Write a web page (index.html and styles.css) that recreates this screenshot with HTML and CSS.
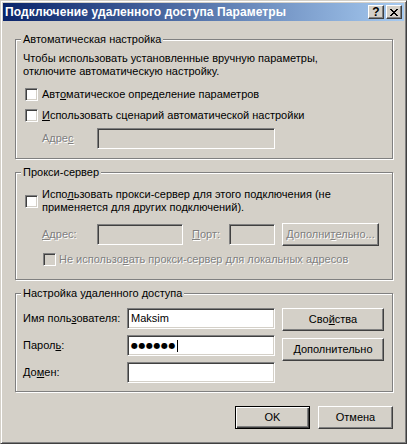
FILE: index.html
```html
<!DOCTYPE html>
<html lang="ru">
<head>
  <meta charset="UTF-8">
  <title>Подключение удаленного доступа Параметры</title>
  <link rel="stylesheet" href="styles.css">
</head>
<body>
  <div class="window">
    <div class="titlebar">
      <span class="title">Подключение удаленного доступа Параметры</span>
      <span class="tb-btn help">?</span>
      <span class="tb-btn close">
        <svg width="8" height="7" viewBox="0 0 8 7"><path d="M0 0h2v1h-2zM6 0h2v1h-2zM1 1h2v1h-2zM5 1h2v1h-2zM2 2h4v1h-4zM3 3h2v1h-2zM2 4h4v1h-4zM1 5h2v1h-2zM5 5h2v1h-2zM0 6h2v1h-2zM6 6h2v1h-2z" fill="#000"/></svg>
      </span>
    </div>

    <div class="content">
      <!-- Автоматическая настройка -->
      <fieldset class="group group-auto">
        <legend>Автоматическая настройка</legend>
        <p class="note">Чтобы использовать установленные вручную параметры,<br>отключите автоматическую настройку.</p>
        <label class="check"><span class="box"></span>Авт<u>о</u>матическое определение параметров</label>
        <label class="check check-2"><span class="box"></span><u>И</u>спользовать сценарий автоматической настройки</label>
        <div class="addr-row">
          <span class="lbl lbl-addr dis">Адре<u>с</u></span>
          <span class="field field-off field-script"></span>
        </div>
      </fieldset>

      <!-- Прокси-сервер -->
      <fieldset class="group group-proxy">
        <legend>Прокси-сервер</legend>
        <label class="check check-multi"><span class="box"></span><span>Испо<u>л</u>ьзовать прокси-сервер для этого подключения (не<br>применяется для других подключений).</span></label>
        <div class="proxy-row">
          <span class="lbl lbl-addr dis"><u>А</u>дрес:</span>
          <span class="field field-off field-host"></span>
          <span class="lbl lbl-port dis"><u>П</u>орт:</span>
          <span class="field field-off field-port"></span>
          <span class="btn btn-adv dis">Дополни<u>т</u>ельно...</span>
        </div>
        <label class="check check-bypass dis"><span class="box box-off"></span>Не использо<u>в</u>ать прокси-сервер для локальных адресов</label>
      </fieldset>

      <!-- Настройка удаленного доступа -->
      <fieldset class="group group-remote">
        <legend>Настройка удаленного доступа</legend>
        <div class="remote">
          <div class="form-grid">
            <span class="lbl">Имя поль<u>з</u>ователя:</span>
            <span class="field">Maksim</span>
            <span class="lbl">Парол<u>ь</u>:</span>
            <span class="field"><span class="dots">●●●●●●</span><span class="caret"></span></span>
            <span class="lbl">До<u>м</u>ен:</span>
            <span class="field"></span>
          </div>
          <div class="side-btns">
            <span class="btn btn-side">Сво<u>й</u>ства</span>
            <span class="btn btn-side"><u>Д</u>ополнительно</span>
          </div>
        </div>
      </fieldset>

      <div class="actions">
        <span class="btn btn-default">OK</span>
        <span class="btn">Отмена</span>
      </div>
    </div>
  </div>
</body>
</html>
```

FILE: styles.css
```css
body {
  margin: 0;
  background: #d4d0c8;
}
.window {
  width: 407px;
  height: 444px;
  box-sizing: border-box;
  border: 1px solid;
  border-color: #d4d0c8 #404040 #404040 #d4d0c8;
  box-shadow: inset 1px 1px 0 #fff, inset -1px -1px 0 #808080;
  padding: 2px;
  background: #d4d0c8;
  font: 11px/13px "Liberation Sans", Arial, sans-serif;
  color: #000;
}
u {
  text-underline-offset: 1px;
}

/* заголовок окна */
.titlebar {
  height: 18px;
  display: flex;
  align-items: center;
  padding: 0 2px 0 2px;
  background: linear-gradient(to right, #0a246a, #a6caf0);
}
.title {
  flex: 1;
  padding-left: 0;
  color: #fff;
  font-weight: bold;
  font-size: 12px;
  letter-spacing: 0.1px;
  white-space: nowrap;
}
.tb-btn {
  width: 16px;
  height: 14px;
  box-sizing: border-box;
  display: flex;
  align-items: center;
  justify-content: center;
  background: #d4d0c8;
  border: 1px solid;
  border-color: #fff #404040 #404040 #fff;
  box-shadow: inset -1px -1px 0 #808080;
}
.help {
  font-weight: bold;
  font-size: 12px;
  line-height: 12px;
}
.close {
  margin-left: 2px;
}

/* содержимое */
.content {
  padding: 12px 10px 0 12px;
}
.group {
  width: 378px;
  box-sizing: border-box;
  margin: 0;
  min-width: 0;
  padding: 0 0 0 7px;
  border: 1px solid #808080;
  box-shadow: inset 1px 1px 0 #fff, 1px 1px 0 #fff;
}
.group legend {
  margin-left: -2px;
  padding: 0 2px;
  line-height: 13px;
  background: #d4d0c8;
}
.group-auto {
  padding-bottom: 9px;
}
.group-proxy {
  margin-top: 7px;
  padding-bottom: 13px;
}
.group-remote {
  margin-top: 7px;
  padding-bottom: 8px;
}
.note {
  margin: 6px 0 0 0;
}

.check {
  display: flex;
  align-items: center;
  margin: 10px 0 0 2px;
}
.check-2 {
  margin-top: 8px;
}
.check-multi {
  margin-top: 9px;
}
.check-bypass {
  margin: 7px 0 0 20px;
}
.check-bypass .box {
  margin-right: 3px;
}
.box {
  width: 13px;
  height: 13px;
  flex-shrink: 0;
  box-sizing: border-box;
  margin-right: 4px;
  background: #fff;
  border: 1px solid;
  border-color: #808080 #fff #fff #808080;
  box-shadow: inset 1px 1px 0 #404040, inset -1px -1px 0 #d4d0c8;
}
.box-off {
  background: #d4d0c8;
}

.dis {
  color: #808080;
  text-shadow: 1px 1px 0 #fff;
}

.field {
  height: 21px;
  box-sizing: border-box;
  display: flex;
  align-items: center;
  padding-left: 3px;
  background: #fff;
  border: 1px solid;
  border-color: #808080 #fff #fff #808080;
  box-shadow: inset 1px 1px 0 #404040, inset -1px -1px 0 #d4d0c8;
}
.field-off {
  background: #d4d0c8;
}

.addr-row {
  display: flex;
  align-items: center;
  margin: 6px 0 0 19px;
}
.lbl-addr {
  width: 55px;
}
.field-script {
  width: 178px;
}

.proxy-row {
  display: flex;
  align-items: center;
  margin: 9px 0 0 19px;
}
.field-host {
  width: 86px;
}
.lbl-port {
  width: 37px;
  margin-left: 9px;
}
.field-port {
  width: 46px;
}

.btn {
  height: 23px;
  width: 75px;
  box-sizing: border-box;
  display: flex;
  align-items: center;
  justify-content: center;
  background: #d4d0c8;
  border: 1px solid;
  border-color: #fff #404040 #404040 #fff;
  box-shadow: inset -1px -1px 0 #808080;
  white-space: nowrap;
}
.btn-adv {
  width: 97px;
  margin-left: 7px;
}
.btn-default {
  border-color: #000;
  box-shadow: inset 1px 1px 0 #fff, inset -1px -1px 0 #404040, inset -2px -2px 0 #808080;
}

.remote {
  display: flex;
  align-items: flex-start;
  margin-top: 8px;
}
.form-grid {
  display: grid;
  grid-template-columns: 104px 148px;
  row-gap: 6px;
  align-items: center;
}
.side-btns {
  display: flex;
  flex-direction: column;
  gap: 7px;
  margin-left: 7px;
}
.btn-side {
  width: 102px;
}
.dots {
  font-family: "DejaVu Sans", sans-serif;
  font-size: 8px;
  letter-spacing: 0.5px;
}
.caret {
  display: inline-block;
  width: 1px;
  height: 12px;
  margin-left: 1px;
  background: #000;
}

.actions {
  width: 378px;
  display: flex;
  justify-content: flex-end;
  gap: 8px;
  margin-top: 14px;
}
```
